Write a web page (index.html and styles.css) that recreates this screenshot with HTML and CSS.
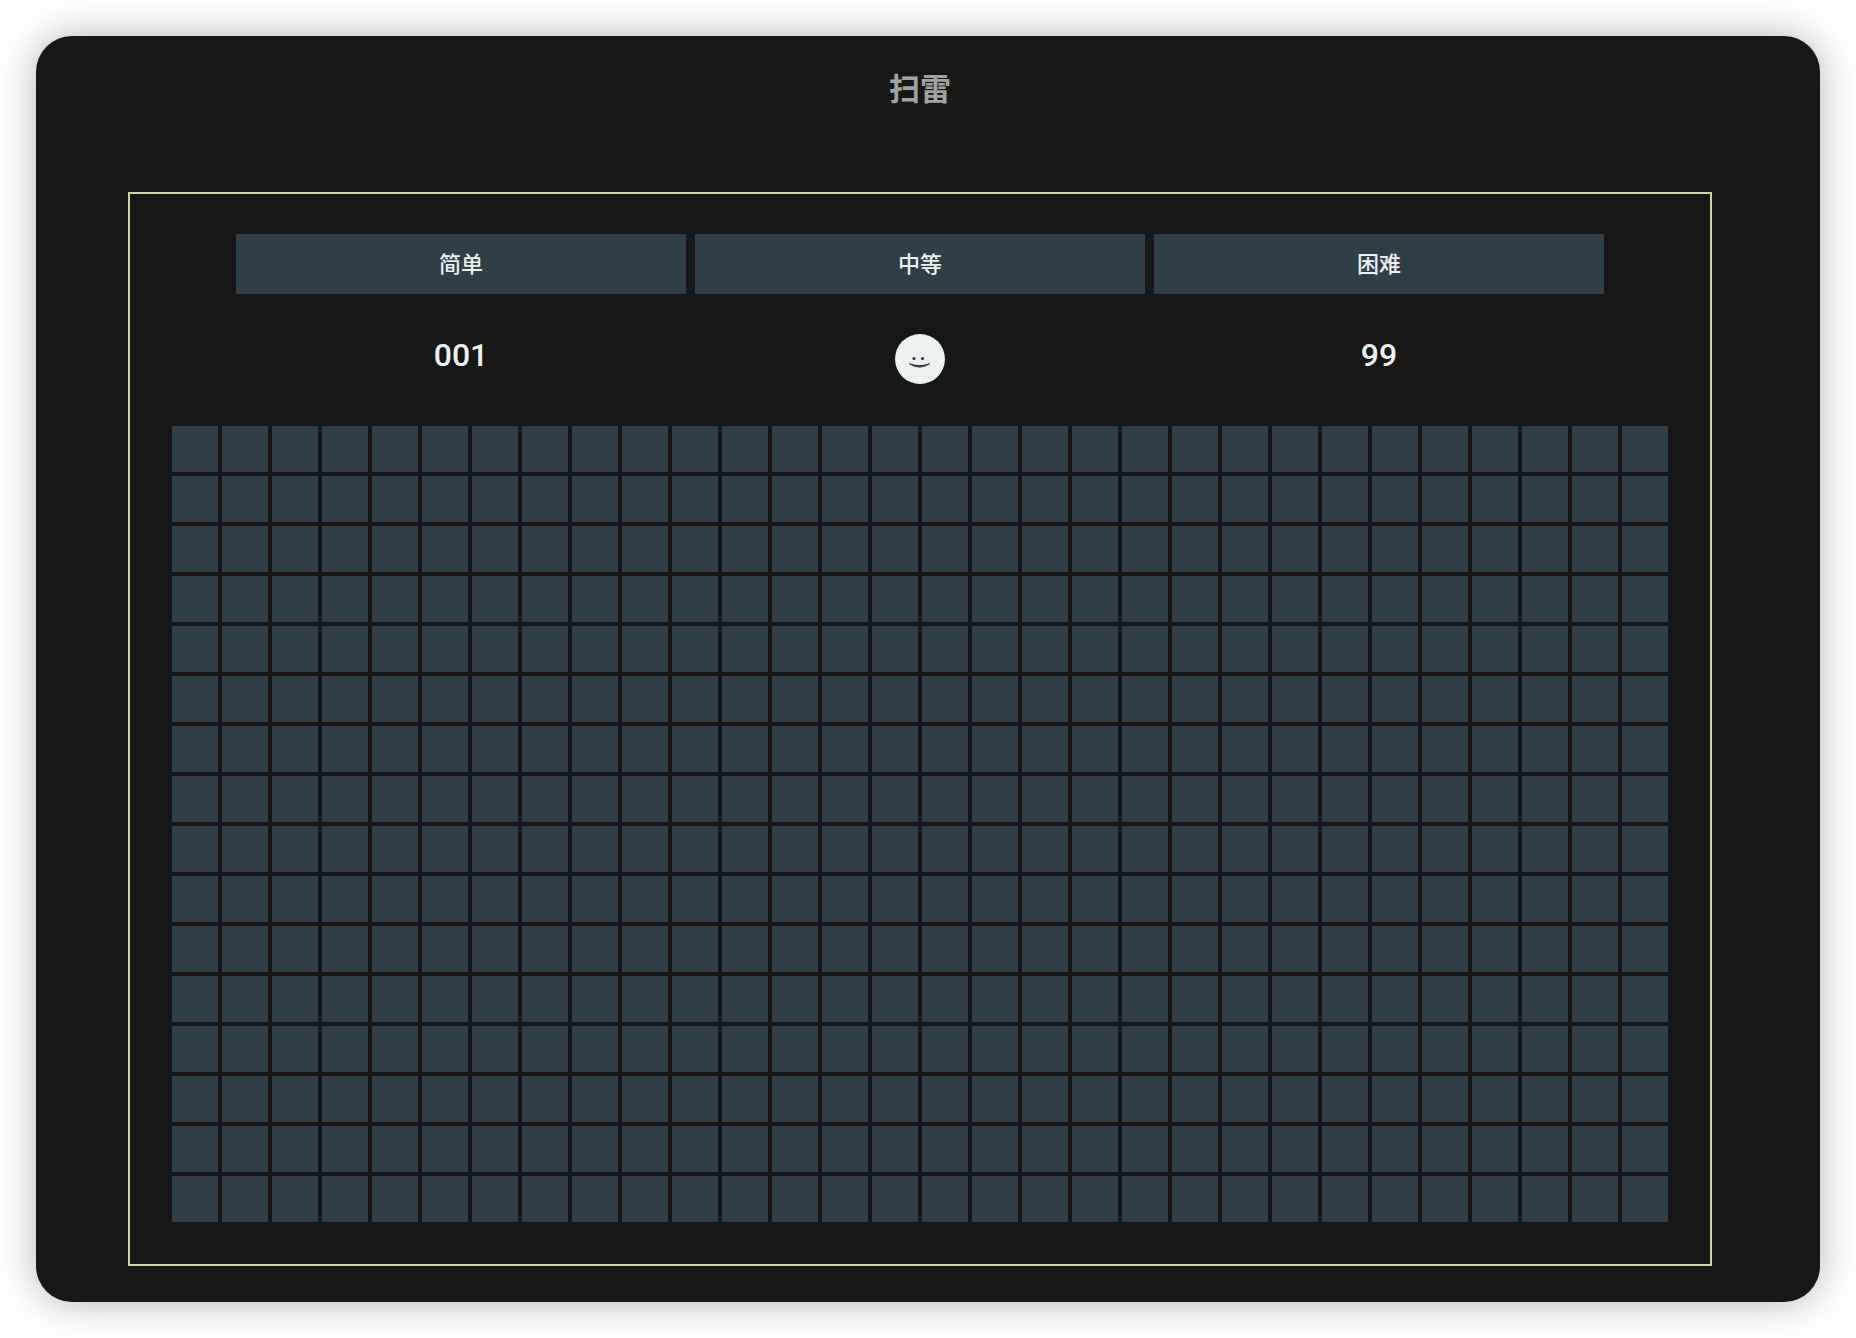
FILE: index.html
```html
<!DOCTYPE html>
<html lang="zh-CN">
<head>
    <meta charset="UTF-8">
    <meta name="viewport" content="width=device-width, initial-scale=1.0">
    <title>扫雷</title>
    <link rel="stylesheet" href="styles.css">
</head>
<body>
    <main class="window">
        <h1>扫雷</h1>
        <div class="game">
            <div class="levels">
                <button type="button" data-level="easy">简单</button>
                <button type="button" data-level="medium">中等</button>
                <button type="button" data-level="hard">困难</button>
            </div>
            <div class="status">
                <span class="counter" id="timer">001</span>
                <button class="face" id="restart" type="button" aria-label="重新开始">
                    <svg viewBox="0 0 50 50" width="50" height="50">
                        <circle cx="19" cy="24.5" r="1.6" />
                        <circle cx="27.5" cy="24.5" r="1.6" />
                        <path d="M14.5 29.8 Q24.5 36.4 34.5 29.8 Q24.5 33.4 14.5 29.8" />
                    </svg>
                </button>
                <span class="counter" id="mines">99</span>
            </div>
            <div class="board" id="board"></div>
        </div>
    </main>

    <script src="game.js"></script>
</body>
</html>
```

FILE: styles.css
```css
* {
    box-sizing: border-box;
}

body {
    margin: 0;
    padding: 36px;
    background: #fff;
    color: #ecf0f1;
    font-family: 'Liberation Sans', 'Noto Sans CJK SC', sans-serif;
}

button {
    border: 0;
    padding: 0;
    background: #303e48;
    color: inherit;
    font-family: inherit;
    cursor: pointer;
}

.window {
    padding: 30px 16px 36px 0;
    border-radius: 36px;
    background: #171717;
    box-shadow: 0 0 40px rgba(0, 0, 0, 0.3);
}

h1 {
    margin: 0 0 78px;
    color: #a2a2a2;
    font-size: 31px;
    font-weight: 700;
    line-height: 48px;
    text-align: center;
}

.game {
    width: fit-content;
    margin: 0 auto;
    padding: 40px 42px 42px;
    border: 2px solid #d3d3a8;
}

.levels,
.status {
    display: grid;
    grid-template-columns: repeat(3, 1fr);
    gap: 9px;
    padding: 0 64px;
}

.levels button {
    height: 60px;
    padding-bottom: 4px;
    font-size: 22px;
    font-weight: 500;
}

.status {
    margin: 40px 0 42px;
    justify-items: center;
}

.counter {
    font-family: Roboto, sans-serif;
    font-size: 32px;
    font-weight: 500;
    line-height: 42px;
}

.face {
    width: 50px;
    height: 50px;
    border-radius: 50%;
    background: #ebf0f0;
}

.face svg {
    display: block;
    fill: #2f3d48;
}

.face path {
    stroke: #2f3d48;
    stroke-width: 1;
    stroke-linejoin: round;
}

.board {
    display: grid;
    grid-template-columns: repeat(30, 46px);
    gap: 4px;
}

.cell {
    height: 46px;
}
```

FILE: game.js
```js
const rows = 16;
const cols = 30;
const board = document.getElementById('board');

for (let i = 0; i < rows * cols; i++) {
    const cell = document.createElement('button');
    cell.type = 'button';
    cell.className = 'cell';
    cell.setAttribute('aria-label', `${Math.floor(i / cols) + 1}-${i % cols + 1}`);
    board.appendChild(cell);
}
```
